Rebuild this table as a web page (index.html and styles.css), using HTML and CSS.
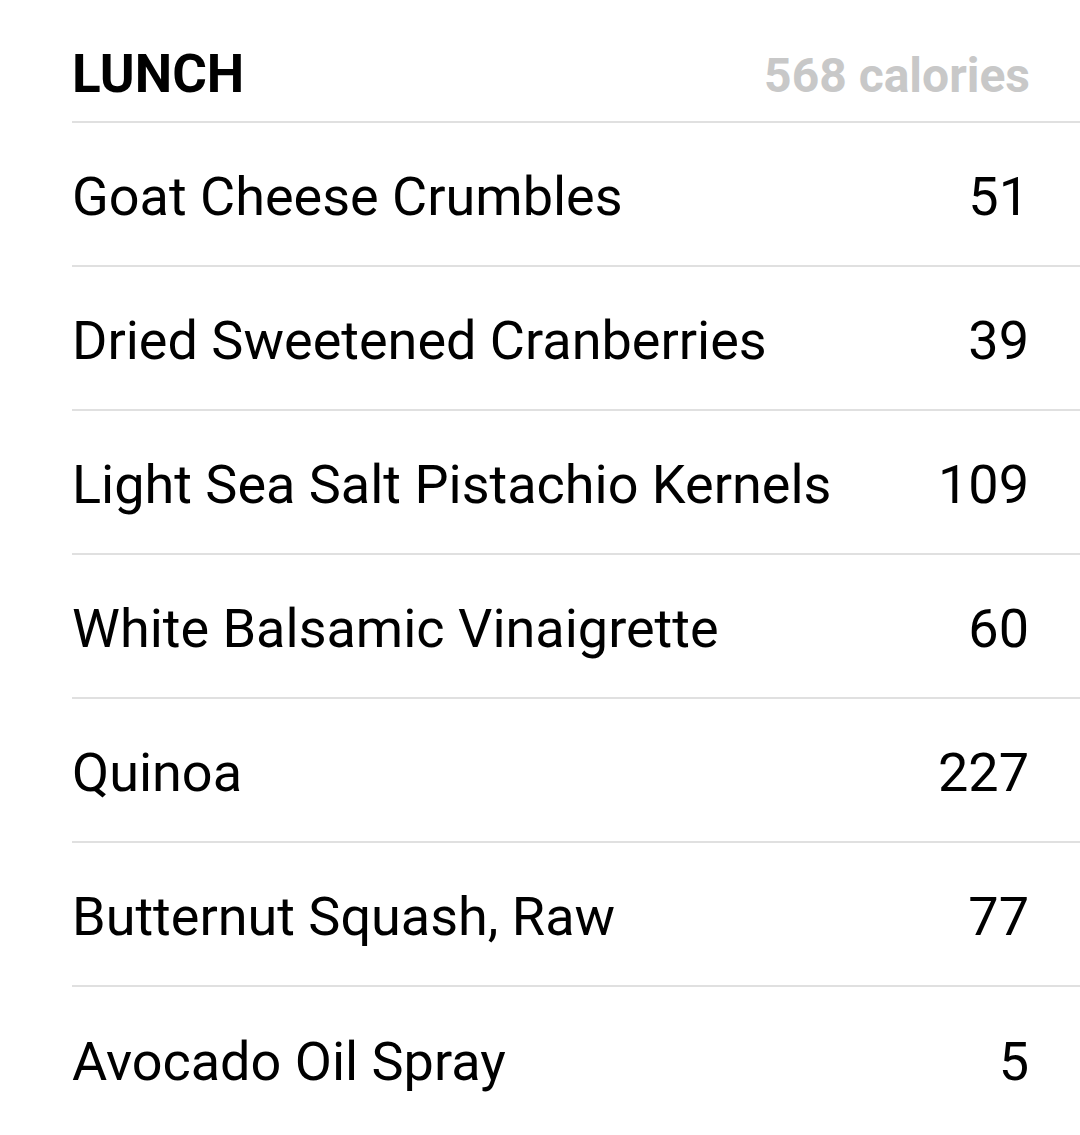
FILE: index.html
```html
<!DOCTYPE html>
<html>
<head>
<meta charset="utf-8">
<link rel="stylesheet" href="styles.css">
</head>
<body>
<div class="meal">
  <div class="meal-header">
    <span class="meal-title">LUNCH</span>
    <span class="meal-total">568 calories</span>
  </div>
  <div class="row"><span class="name">Goat Cheese Crumbles</span><span class="cal">51</span></div>
  <div class="row"><span class="name">Dried Sweetened Cranberries</span><span class="cal">39</span></div>
  <div class="row"><span class="name">Light Sea Salt Pistachio Kernels</span><span class="cal">109</span></div>
  <div class="row"><span class="name">White Balsamic Vinaigrette</span><span class="cal">60</span></div>
  <div class="row"><span class="name">Quinoa</span><span class="cal">227</span></div>
  <div class="row"><span class="name">Butternut Squash, Raw</span><span class="cal">77</span></div>
  <div class="row last"><span class="name">Avocado Oil Spray</span><span class="cal">5</span></div>
</div>
</body>
</html>
```
FILE: styles.css
```css
html, body {
  margin: 0;
  padding: 0;
  background: #ffffff;
}
body {
  font-family: Roboto, "Liberation Sans", sans-serif;
  color: #000;
}
.meal {
  padding-left: 72px;
}
.meal-header {
  display: flex;
  justify-content: space-between;
  align-items: baseline;
  height: 123px;
  box-sizing: border-box;
  padding-top: 44px;
  padding-right: 50px;
  border-bottom: 2px solid #e0e0e0;
}
.meal-title {
  font-weight: 700;
  font-size: 53px;
  line-height: 60px;
}
.meal-total {
  font-weight: 700;
  font-size: 48px;
  color: #c8c8c8;
}
.row {
  display: flex;
  justify-content: space-between;
  align-items: center;
  height: 144px;
  box-sizing: border-box;
  padding-right: 51px;
  padding-top: 4px;
  border-bottom: 2px solid #e0e0e0;
  font-size: 54px;
}
.row.last {
  border-bottom: none;
}
```
